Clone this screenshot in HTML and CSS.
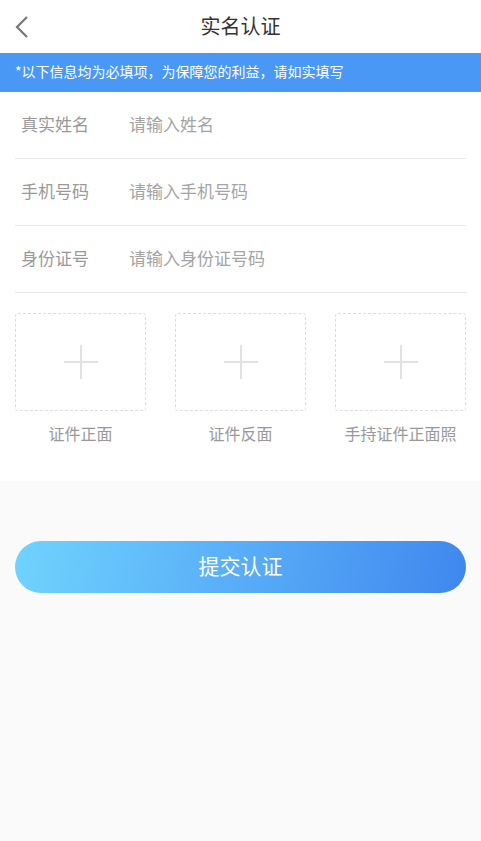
FILE: index.html
```html
<!DOCTYPE html>
<html lang="zh-CN">
<head>
<meta charset="utf-8">
<title>实名认证</title>
<link rel="stylesheet" href="styles.css">
</head>
<body>
<div class="page">
  <div class="topbar">
    <span class="back">
      <svg width="14" height="22" viewBox="0 0 14 22"><path d="M12 1 L2 11 L12 21" fill="none" stroke="#777" stroke-width="2.2"/></svg>
    </span>
    <h1 class="title">实名认证</h1>
  </div>
  <div class="notice">*以下信息均为必填项，为保障您的利益，请如实填写</div>

  <div class="form">
    <div class="row">
      <label class="row-label">真实姓名</label>
      <input class="row-input" type="text" placeholder="请输入姓名">
    </div>
    <div class="row">
      <label class="row-label">手机号码</label>
      <input class="row-input" type="text" placeholder="请输入手机号码">
    </div>
    <div class="row">
      <label class="row-label">身份证号</label>
      <input class="row-input" type="text" placeholder="请输入身份证号码">
    </div>

    <div class="uploads">
      <div class="upload">
        <div class="upload-box"><span class="plus"></span></div>
        <div class="upload-name">证件正面</div>
      </div>
      <div class="upload">
        <div class="upload-box"><span class="plus"></span></div>
        <div class="upload-name">证件反面</div>
      </div>
      <div class="upload">
        <div class="upload-box"><span class="plus"></span></div>
        <div class="upload-name">手持证件正面照</div>
      </div>
    </div>
  </div>

  <div class="submit-area">
    <button class="submit-btn">提交认证</button>
  </div>
</div>
</body>
</html>
```

FILE: styles.css
```css
* {box-sizing: border-box; font-family: "Noto Sans CJK SC", "Noto Sans", sans-serif;}
html, body {margin: 0; padding: 0; background: #fafafa;}
.page {width: 481px; min-height: 841px; background: #fafafa;}

.topbar {position: relative; height: 53px; background: #fff; display: flex; align-items: center; justify-content: center;}
.back {position: absolute; left: 15px; top: 16px; width: 14px; height: 22px;}
.back svg {display: block;}
.title {margin: 0 0 2px; font-size: 20px; font-weight: normal; color: #333; line-height: 28px;}

.notice {height: 39px; background: #4a98f6; color: #fff; font-size: 14px; line-height: 37px; padding-left: 15px;}

.form {background: #fff; padding: 0 15px; height: 389px;}
.row {height: 67px; border-bottom: 1px solid #e8e8e8; display: flex; align-items: center; padding: 0 0 4px 6px;}
.row-label {width: 108px; font-size: 17px; color: #999;}
.row-input {flex: 1; border: none; outline: none; background: transparent; font-size: 17px; color: #333; padding: 0;}
.row-input::placeholder {color: #a4a4a4;}

.uploads {display: flex; justify-content: space-between; padding-top: 20px;}
.upload {width: 131px; display: flex; flex-direction: column; align-items: center;}
.upload-box {position: relative; width: 131px; height: 98px; border: 1px dashed #ddd; border-radius: 3px;}
.plus {position: absolute; left: 48px; top: 31px; width: 34px; height: 34px;}
.plus::before, .plus::after {content: ""; position: absolute; background: #e2e2e2;}
.plus::before {left: 0; top: 16px; width: 34px; height: 2px;}
.plus::after {left: 16px; top: 0; width: 2px; height: 34px;}
.upload-name {margin-top: 10px; font-size: 16px; color: #999; line-height: 24px; white-space: nowrap;}

.submit-area {padding: 60px 15px 0;}
.submit-btn {display: block; width: 451px; height: 52px; border: none; border-radius: 26px; background: linear-gradient(100deg, #70d3fd 0%, #5bb1f8 45%, #3f87ef 100%); color: #fff; font-size: 21px; line-height: 48px; padding: 0 0 4px; cursor: pointer;}
```
